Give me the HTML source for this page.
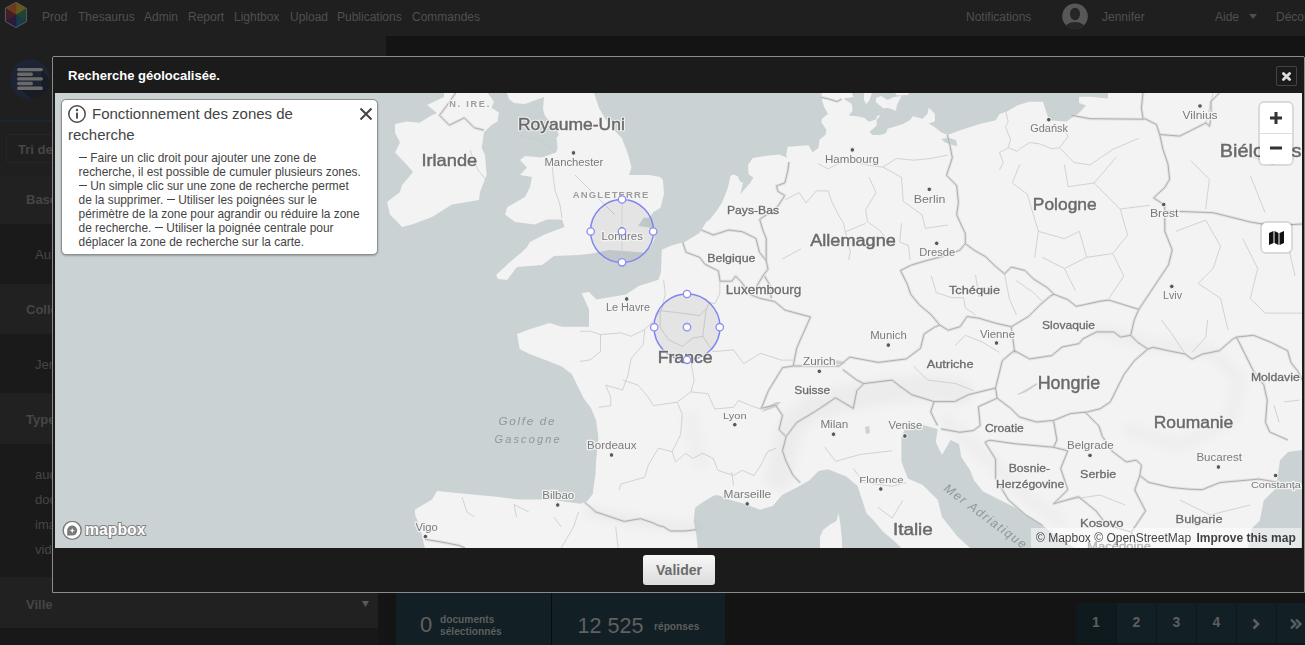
<!DOCTYPE html>
<html><head><meta charset="utf-8">
<style>
*{margin:0;padding:0;box-sizing:border-box}
html,body{width:1305px;height:645px;overflow:hidden;background:#141414;font-family:"Liberation Sans",sans-serif}
.a{position:absolute}
#nav{left:0;top:0;width:1305px;height:36px;background:#1f1f1f;box-shadow:0 1px 1px #181818}
#nav span{position:absolute;top:10px;font-size:12px;color:#4f4f4f;white-space:nowrap;line-height:14px}
.sbt{position:absolute;font-size:13px;color:#464646;white-space:nowrap;line-height:15px}
.b{font-weight:bold}
#modal{left:52px;top:56px;width:1253px;height:537px;background:#1b1b1b;border:1px solid #8c8c8c;border-radius:2px 2px 0 0}
#map{left:55px;top:93px;width:1247px;height:455px;background:#cad2d3;overflow:hidden}
#map svg{position:absolute;left:0;top:0}
.lbl{position:absolute;white-space:nowrap;color:#6e6e6e;text-shadow:0 0 2px #fff,0 0 2px #fff,0 0 1px #fff;line-height:1}
.dd{display:inline-block;width:8px;height:1.1px;background:#444;vertical-align:3.6px;margin-right:3.7px}
.pg{position:absolute;top:603px;height:40px;width:40px;background:#121f24;border-left:1px solid #0d171a;color:#5e5e5e;font-weight:bold;font-size:14px;text-align:center;line-height:38px}
</style></head><body>
<!-- NAV -->
<div id="nav" class="a">
  <svg class="a" style="left:0;top:0" width="34" height="33" viewBox="0 0 34 33">
    <polygon points="16.1,15 16.1,2.3 5.4,8.2" fill="#6a3a1c"/>
    <polygon points="16.1,15 16.1,2.3 26.6,8.4" fill="#6a561c"/>
    <polygon points="16.1,15 26.6,8.4 26.6,21.5" fill="#1d4536"/>
    <polygon points="16.1,15 26.6,21.5 16.1,27.6" fill="#193c4c"/>
    <polygon points="16.1,15 16.1,27.6 5.4,21.5" fill="#271d3a"/>
    <polygon points="16.1,15 5.4,21.5 5.4,8.2" fill="#451d29"/>
    <polygon points="16.1,2.3 26.6,8.4 26.6,21.5 16.1,27.6 5.4,21.5 5.4,8.2" fill="none" stroke="#5a5a5a" stroke-width="1"/>
  </svg>
  <span style="left:42px">Prod</span>
  <span style="left:78px">Thesaurus</span>
  <span style="left:144px">Admin</span>
  <span style="left:188px">Report</span>
  <span style="left:234px">Lightbox</span>
  <span style="left:290px">Upload</span>
  <span style="left:337px">Publications</span>
  <span style="left:412px">Commandes</span>
  <span style="left:966px">Notifications</span>
  <svg class="a" style="left:1062px;top:3px" width="27" height="27" viewBox="0 0 27 27">
    <defs><clipPath id="av"><circle cx="13" cy="13.3" r="12.8"/></clipPath></defs>
    <circle cx="13" cy="13.3" r="12.8" fill="#575757"/>
    <g clip-path="url(#av)" fill="#262626">
      <ellipse cx="13" cy="11" rx="5" ry="6.2"/>
      <ellipse cx="13" cy="27" rx="11" ry="8"/>
    </g>
  </svg>
  <span style="left:1102px">Jennifer</span>
  <span style="left:1215px">Aide</span>
  <svg class="a" style="left:1249px;top:14px" width="9" height="6"><polygon points="0,0 8,0 4,5" fill="#4f4f4f"/></svg>
  <span style="left:1276px">Déconnexion</span>
</div>
<!-- below nav -->
<div class="a" style="left:0;top:36px;width:386px;height:609px;background:#1f1f1f"></div>
<div class="a" style="left:0;top:120px;width:378px;height:2px;background:#1d2433"></div>
<svg class="a" style="left:9px;top:58px" width="42" height="42" viewBox="0 0 42 42">
 <defs><clipPath id="ci"><circle cx="21" cy="21" r="20"/></clipPath></defs>
 <circle cx="21" cy="21" r="20" fill="#1d2433"/>
 <path d="M32,11 L44,26 L44,44 L26,44 L10,30 L32,30Z" fill="#181c26" clip-path="url(#ci)"/>
 <g stroke="#6a6a6a" stroke-width="3.4" stroke-linecap="round">
  <path d="M9.7,11.6 H32.3 M9.7,16.2 H22.3 M9.7,20.9 H32.3 M9.7,25.5 H22.3 M9.7,30.2 H32.3"/>
 </g>
</svg>
<!-- sidebar rows -->
<div class="a" style="left:0;top:122px;width:378px;height:523px;background:#1f1f1f"></div>
<div class="a" style="left:6px;top:134px;width:372px;height:29px;border:1px solid #262626;border-radius:2px"></div>
<div class="sbt b" style="left:18px;top:142px">Tri de</div>
<div class="a" style="left:0;top:175px;width:378px;height:49px;background:#212121"></div>
<div class="sbt b" style="left:26px;top:192px">Base</div>
<div class="a" style="left:0;top:224px;width:378px;height:60px;background:#1a1a1a"></div>
<div class="sbt" style="left:35px;top:247px">Aur</div>
<div class="a" style="left:0;top:284px;width:378px;height:50px;background:#212121"></div>
<div class="sbt b" style="left:26px;top:302px">Colle</div>
<div class="a" style="left:0;top:334px;width:378px;height:59px;background:#1a1a1a"></div>
<div class="sbt" style="left:35px;top:357px">Jen</div>
<div class="a" style="left:0;top:393px;width:378px;height:51px;background:#212121"></div>
<div class="sbt b" style="left:26px;top:412px">Type</div>
<div class="a" style="left:0;top:444px;width:378px;height:133px;background:#1a1a1a"></div>
<div class="sbt" style="left:35px;top:467px">aud</div>
<div class="sbt" style="left:35px;top:492px">doc</div>
<div class="sbt" style="left:35px;top:517px">ima</div>
<div class="sbt" style="left:35px;top:542px">vid</div>
<div class="a" style="left:0;top:577px;width:378px;height:51px;background:#212121"></div>
<div class="sbt b" style="left:26px;top:597px">Ville</div>
<svg class="a" style="left:362px;top:601px" width="8" height="7"><polygon points="0,0 7,0 3.5,6" fill="#5a5a5a"/></svg>
<div class="a" style="left:0;top:628px;width:378px;height:17px;background:#181818"></div>
<div class="a" style="left:378px;top:122px;width:18px;height:523px;background:#151515"></div>
<div class="a" style="left:386px;top:36px;width:919px;height:609px;background:#141414"></div>
<div class="a" style="left:378px;top:36px;width:8px;height:86px;background:#1f1f1f"></div>
<!-- stats -->
<div class="a" style="left:396px;top:593px;width:329px;height:52px;background:#121f24"></div>
<div class="a" style="left:551px;top:593px;width:1px;height:52px;background:#0b0b0b"></div>
<div class="a" style="left:420px;top:613px;font-size:22px;color:#606060;line-height:24px">0</div>
<div class="a b" style="left:440px;top:613.5px;font-size:10.2px;color:#5e5e5e;line-height:12px">documents<br>sélectionnés</div>
<div class="a" style="left:577.5px;top:613.5px;font-size:21.6px;color:#606060;line-height:24px">12 525</div>
<div class="a b" style="left:654px;top:620.5px;font-size:10.2px;color:#5e5e5e;line-height:12px">réponses</div>
<!-- pagination -->
<div class="a" style="left:1076px;top:603px;width:229px;height:40px;border-radius:3px 0 0 3px;overflow:hidden;background:#121f24"></div>
<div class="pg" style="left:1076px;background:#0f1a1e;border-left:none;border-radius:3px 0 0 3px">1</div>
<div class="pg" style="left:1116px">2</div>
<div class="pg" style="left:1156px">3</div>
<div class="pg" style="left:1196px">4</div>
<div class="pg" style="left:1236px"></div><svg class="a" style="left:1251px;top:618px" width="12" height="12" viewBox="0 0 12 12"><path d="M2.5,1.5 L7,6 L2.5,10.5" fill="none" stroke="#5e5e5e" stroke-width="2.6"/></svg>
<div class="pg" style="left:1276px"></div><svg class="a" style="left:1289px;top:618px" width="14" height="12" viewBox="0 0 14 12"><path d="M2,1.5 L6.5,6 L2,10.5 M7,1.5 L11.5,6 L7,10.5" fill="none" stroke="#5e5e5e" stroke-width="2.4"/></svg>
<!-- MODAL -->
<div id="modal" class="a"></div>
<div class="a b" style="left:68px;top:68px;font-size:13px;color:#fff;line-height:15px">Recherche géolocalisée.</div>
<div class="a" style="left:1276px;top:66px;width:21px;height:20px;border:1px solid #444;border-radius:2px"></div>
<svg class="a" style="left:1281px;top:71px" width="11" height="11" viewBox="0 0 11 11"><path d="M2.4,2.4 L8.6,8.6 M8.6,2.4 L2.4,8.6" stroke="#dcdcdc" stroke-width="2.8" stroke-linecap="round"/></svg>
<div class="a" style="left:643px;top:555px;width:72px;height:30px;border-radius:3px;background:linear-gradient(#f7f7f7,#dcdcdc)"></div>
<div class="a b" style="left:643px;top:562px;width:72px;text-align:center;font-size:14px;color:#6b6b6b;line-height:16px">Valider</div>
<!-- MAP -->
<div id="map" class="a">
<svg width="1247" height="455" viewBox="55 93 1247 455">
<defs><filter id="bl" x="-20%" y="-20%" width="140%" height="140%"><feGaussianBlur stdDeviation="5"/></filter></defs>
<g fill="#f3f3f3"><path d="M821.5,93.0 L822.0,100.4 L824.5,107.7 L828.0,113.8 L822.0,118.7 L821.5,122.4 L826.4,129.8 L825.7,134.7 L819.6,139.6 L818.4,148.0 L812.7,152.3 L808.5,145.3 L787.6,146.7 L786.2,155.0 L789.0,162.0 L787.6,158.0 L779.3,154.4 L766.7,155.8 L752.8,158.0 L748.0,165.0 L748.6,174.6 L753.5,177.4 L750.0,183.0 L740.2,194.2 L743.0,183.0 L740.2,181.6 L737.4,176.0 L733.2,174.6 L730.4,176.0 L727.7,188.6 L722.0,202.5 L716.5,211.0 L709.5,220.0 L706.4,221.8 L699.5,233.0 L685.5,241.4 L671.6,245.5 L661.8,249.7 L661.0,272.0 L658.5,279.7 L638.7,286.0 L626.0,294.5 L611.4,297.0 L596.5,299.5 L589.0,292.0 L581.7,293.3 L589.0,309.4 L589.0,326.8 L561.8,326.8 L549.4,323.0 L529.6,329.3 L517.0,334.0 L519.7,349.0 L529.6,354.0 L549.4,361.5 L561.8,366.5 L571.7,374.0 L579.0,388.8 L583.5,398.0 L591.0,408.0 L596.0,420.0 L598.4,437.6 L596.0,462.0 L595.5,473.6 L592.7,494.0 L587.3,501.0 L580.5,503.7 L548.8,499.6 L519.0,499.6 L499.0,497.0 L462.0,493.4 L437.0,491.0 L432.0,499.6 L415.0,509.5 L415.0,514.5 L420.0,527.0 L424.8,548.0 L697.8,548.0 L696.4,535.0 L693.7,521.4 L695.0,507.7 L704.6,501.0 L714.0,495.5 L717.6,495.0 L732.3,500.5 L745.0,504.0 L760.0,509.7 L772.8,506.0 L782.0,495.0 L796.7,487.6 L809.5,480.2 L818.7,471.0 L828.0,469.2 L846.3,476.6 L857.4,485.7 L862.9,502.3 L866.5,513.3 L874.0,520.7 L883.0,531.7 L893.0,540.0 L901.5,548.0 L970.0,548.0 L957.0,536.0 L942.0,517.0 L937.8,500.0 L922.8,485.0 L907.8,478.5 L901.4,461.4 L901.4,437.8 L905.7,427.0 L922.8,425.0 L937.8,429.3 L935.7,442.0 L942.0,455.0 L950.6,440.0 L959.0,444.0 L961.3,457.0 L970.0,470.0 L974.2,480.6 L982.7,491.3 L1000.0,500.0 L1017.0,508.5 L1029.8,517.0 L1042.7,525.6 L1060.0,538.4 L1075.0,548.0 L1248.0,548.0 L1251.6,528.8 L1259.7,520.8 L1263.7,500.6 L1275.8,488.5 L1280.0,460.3 L1288.0,452.0 L1302.0,450.0 L1302.0,93.0 L1108.0,93.0 L1108.0,98.6 L1090.0,96.7 L1079.0,96.7 L1079.0,103.0 L1086.0,105.4 L1079.0,112.9 L1066.5,121.5 L1049.0,120.3 L1046.6,112.9 L1043.0,101.7 L1029.0,101.7 L1017.0,105.4 L1007.0,111.6 L999.5,114.0 L995.8,120.3 L979.6,124.0 L961.0,130.0 L947.4,135.0 L941.0,132.2 L934.9,127.3 L928.7,123.6 L934.9,121.2 L934.9,113.8 L928.7,107.7 L927.5,113.8 L922.6,118.7 L912.8,116.3 L910.0,120.1 L903.0,124.0 L887.5,128.7 L886.0,133.3 L879.8,134.9 L872.0,134.9 L869.7,131.8 L876.7,125.6 L876.7,119.4 L880.5,115.5 L877.4,115.5 L875.9,119.4 L868.9,121.7 L864.3,117.8 L856.5,116.3 L848.8,115.5 L852.6,110.8 L851.9,103.9 L843.3,98.4 L853.4,96.9 L851.9,93.0Z"/><path d="M507.0,93.0 L509.0,99.0 L514.0,103.0 L525.0,104.0 L544.0,97.0 L543.0,109.0 L545.0,116.0 L555.0,127.0 L559.0,135.0 L556.5,138.0 L557.7,148.0 L556.0,152.5 L542.0,157.5 L525.0,156.0 L520.0,160.0 L527.0,167.4 L520.0,175.0 L532.0,177.0 L530.0,187.0 L525.0,197.0 L507.4,207.0 L505.0,214.6 L515.0,222.0 L534.7,224.5 L547.0,219.5 L562.0,219.5 L564.5,227.0 L544.6,234.4 L530.0,242.0 L527.0,247.0 L522.0,252.0 L510.0,262.0 L496.0,275.0 L498.0,279.0 L507.0,280.0 L517.0,267.0 L542.0,265.0 L554.0,256.0 L579.0,255.0 L591.6,253.6 L609.0,250.0 L622.8,251.0 L643.7,252.5 L650.7,247.0 L654.8,238.6 L653.4,233.0 L649.3,227.4 L638.0,226.0 L643.7,217.7 L649.3,217.7 L653.4,212.0 L660.4,208.0 L664.0,194.0 L663.0,180.0 L660.0,177.0 L649.0,175.0 L629.0,175.0 L631.5,167.4 L629.0,157.5 L626.5,150.0 L621.5,137.6 L609.0,125.0 L599.0,108.0 L594.0,93.0Z"/><path d="M444.0,93.0 L487.8,93.0 L494.0,101.6 L491.5,107.7 L498.9,112.6 L497.6,121.2 L491.5,124.9 L484.0,132.2 L481.7,148.0 L485.0,155.0 L486.6,175.0 L480.0,192.0 L479.0,200.0 L452.0,204.6 L432.0,217.0 L412.0,224.5 L402.0,227.0 L390.0,214.5 L387.0,202.0 L400.0,192.0 L402.0,185.0 L413.0,172.0 L407.0,165.0 L395.0,152.5 L400.0,142.6 L395.0,132.7 L395.0,124.0 L407.0,121.5 L419.6,122.8 L429.5,116.6 L437.0,113.0 L427.0,105.0 L444.0,97.0Z"/><path d="M838.5,513.0 L840.5,525.0 L842.0,540.0 L842.0,548.0 L820.0,548.0 L820.0,537.0 L823.0,530.0 L830.0,524.5 L836.5,521.0Z"/><path d="M875.9,97.7 L881.3,96.1 L887.5,100.0 L893.7,96.9 L901.5,96.1 L896.8,105.4 L896.0,110.8 L887.5,107.7 L883.6,108.5 L875.9,102.3Z"/><path d="M864.0,93.0 L872.0,93.0 L869.0,101.0 L866.0,104.0 L864.0,100.0Z"/><path d="M895.0,93.0 L909.0,93.0 L908.0,95.0 L897.0,95.5Z"/></g>
<g filter="url(#bl)" fill="none" stroke="#000" stroke-linecap="round" stroke-linejoin="round">
 <path d="M778,478 L785,450 L792,425 L812,408 L845,398 L880,392 L920,388 L960,392" stroke-width="26" opacity="0.028"/>
 <path d="M590,512 L640,522 L695,528" stroke-width="10" opacity="0.03"/>
 <path d="M1100,330 L1150,345 L1210,350 L1240,380 L1230,420 L1180,445 L1130,430" stroke-width="14" opacity="0.02"/>
 <path d="M945,420 L990,460 L1030,500 L1060,520" stroke-width="14" opacity="0.02"/>
 <path d="M690,420 L700,460" stroke-width="18" opacity="0.015"/>
</g>
<g fill="#cad2d3">
 <path d="M761,412 L768,406 L776,402 L781,402 L776,407 L768,410Z"/>
 <path d="M865,427 L869,426 L870,433 L866,434Z"/>
 <path d="M1017.7,394 L1025,390 L1036.4,383 L1037,385 L1026,392 L1018,395Z"/>
 <path d="M833,360 L842,361 L845,364 L836,364Z"/>
 <path d="M941.2,138.9 L948.6,137.7 L956,140.1 L957.3,146.3 L952.3,145.1 L944.9,142.6Z"/>
</g>
<path d="M663.6,280.0 L665.3,293.6 L661.9,309.0 L653.3,320.9 L644.8,329.4 L643.1,344.7 L631.2,358.3 L627.8,375.5 L622.6,390.0 L605.6,385.1 L610.7,397.1 L610.7,405.6 L598.8,407.3 M580.0,331.2 L590.2,331.2 L600.5,334.6 L620.9,332.9 L631.2,336.3 L644.8,329.4 M600.5,334.6 L600.5,351.6 L590.2,359.8 L580.0,361.5 M660.2,310.7 L675.5,312.4 L689.1,314.1 L699.4,315.8 L706.2,309.0 L709.6,302.2 L714.7,303.9 L719.8,293.6 L719.8,280.0 M706.2,309.0 L702.8,336.3 L692.6,338.0 L682.3,346.5 L668.7,339.7 L660.2,327.7 L660.2,310.7 M702.8,336.3 L713.0,351.6 L733.5,349.9 L743.7,363.6 L760.7,353.3 L781.2,360.1 L793.2,360.1 M690.8,361.5 L694.2,380.0 L690.8,391.9 L677.2,402.2 L653.3,405.6 L648.2,397.1 L638.0,385.1 L622.6,380.0 M690.8,391.9 L707.9,393.6 L714.7,409.0 L733.5,407.3 L738.6,400.5 L750.5,405.6 L760.8,409.0 M677.2,402.2 L682.3,414.1 L680.6,434.6 L672.1,451.6 L675.5,461.9 L685.7,453.3 L692.6,458.4 L702.8,453.3 L713.0,458.4 L718.1,470.4 L733.5,475.5 L742.0,470.4 L754.0,475.5 L760.8,465.3 L767.6,451.6 L776.1,448.2 M672.1,451.6 L658.4,448.2 L648.2,465.3 L644.8,477.2 L620.9,484.0 L619.2,490.0 M731.8,472.1 L733.5,485.7 M785.6,199.5 L799.2,192.6 L806.0,202.9 L816.3,190.9 L828.2,190.9 L831.6,201.2 L838.4,214.8 L843.6,223.3 L845.3,231.9 L850.4,252.3 L848.7,260.0 M869.1,177.3 L876.0,192.6 L865.7,209.7 L867.4,221.6 L879.4,230.1 L886.2,238.7 M882.8,167.1 L901.5,177.3 L903.2,201.2 L922.0,214.8 L925.4,228.4 L947.6,225.0 M882.8,167.1 L896.4,158.5 L913.5,160.2 L930.5,158.5 L947.6,155.1 M818.0,163.6 L828.2,168.8 L845.3,160.2 L869.1,165.3 L882.8,167.1 M901.5,223.3 L899.8,242.1 L908.4,245.5 L910.1,260.0 M845.3,231.9 L865.7,223.3 M800.9,248.9 L782.2,259.1 M1005.7,111.6 L1008.2,121.5 L1005.7,126.5 L1008.2,134.0 L1010.6,138.9 L1008.2,147.6 L999.5,152.6 L1003.2,162.5 L999.5,170.0 M1008.2,147.6 L1017.3,151.3 L1019.8,148.8 L1029.7,142.6 L1039.7,143.9 L1052.0,148.8 L1059.5,147.6 L1068.2,136.4 L1064.4,130.2 M1059.5,147.6 L1073.9,162.5 L1090.0,165.0 M1090.0,165.0 L1112.7,149.5 L1138.8,138.3 M1019.8,164.4 L1012.3,183.0 L1027.2,194.1 L1038.3,231.3 L1034.6,257.3 M1064.4,164.4 L1068.1,186.7 L1094.1,183.0 L1116.4,156.9 M1094.1,183.0 L1120.2,209.0 L1127.6,235.0 L1112.7,253.6 L1086.7,257.3 L1064.4,268.5 L1042.0,257.3 M1120.2,209.0 L1149.9,205.3 M1038.3,231.3 L1064.4,238.7 L1079.3,231.3 L1086.7,257.3 M1112.7,253.6 L1123.9,276.0 L1109.0,298.3 M1064.4,268.5 L1075.5,290.8 M1213.1,93.0 L1205.7,123.5 M1220.5,142.1 L1242.8,153.2 L1272.6,164.4 L1302.0,153.2 M1190.8,160.7 L1209.4,179.3 L1205.7,209.0 M1250.3,175.6 L1265.2,212.7 M1175.9,231.3 L1205.7,220.2 L1220.5,246.2 L1213.1,268.5 L1198.2,283.4 L1220.5,298.3 L1228.0,330.0 M1242.8,238.7 L1257.7,268.5 L1250.3,298.3 L1265.2,313.1 L1302.0,313.1 M1287.5,242.5 L1295.0,276.0 M1207.5,320.0 L1205.8,337.1 L1192.1,352.4 M1161.4,320.0 L1171.7,333.6 L1185.3,354.1 M1284.2,401.9 L1299.6,400.1 M1274.0,405.3 L1279.1,422.3 M825.0,447.3 L835.6,461.4 L860.3,454.4 L892.2,450.8 M853.3,468.5 L863.9,482.7 L892.2,486.2 L906.3,482.7 M878.0,507.4 L892.2,518.0 L902.8,500.3 M913.4,366.0 L927.5,380.1 L955.8,383.6 L973.5,390.7 M462.0,497.1 L467.0,512.0 L474.4,517.0 M528.9,512.0 L514.0,504.5 L516.5,517.0 M553.7,517.0 L561.2,526.9 M578.5,512.0 L573.6,526.9 L561.2,548.0 M615.7,526.9 L618.2,548.0 M552.0,157.0 L553.0,175.0 L555.0,190.0 L560.0,205.0 L562.0,218.0 M931.2,275.6 L936.3,292.6 L951.6,297.7 L963.6,297.7 L965.3,308.0 L975.5,314.8 M975.5,275.0 L979.0,297.0 M1004.5,273.9 L1009.6,299.5 L1016.4,314.8 M1016.4,280.7 L1033.5,292.6 L1042.0,301.2 M955.0,345.5 L965.3,335.3 L982.3,342.1 L999.4,352.3 M1067.0,500.0 L1100.0,495.0 L1125.0,505.0 M1180.0,500.0 L1210.0,515.0 L1250.0,505.0 M470.0,150.0 L478.0,170.0 L486.0,180.0 M520.0,135.0 L540.0,140.0 L556.0,152.0 M575.0,175.0 L600.0,200.0 L615.0,215.0" fill="none" stroke="#c9c9c9" stroke-width="0.8" stroke-linejoin="round"/><path d="M820.8,97.3 L829.4,99.1 L836.8,101.6 L841.7,99.1 M789.0,162.0 L787.6,171.8 L784.8,183.0 L776.5,185.8 L777.9,191.4 L784.8,195.5 L779.3,204.0 L776.5,208.0 L759.7,219.3 L762.8,230.0 L766.2,238.5 L766.2,260.7 L768.0,269.2 L762.8,276.0 L757.7,284.6 L750.8,294.8 M701.4,230.0 L713.3,235.0 L728.7,230.0 L742.3,231.7 L756.0,238.5 L759.4,252.2 L766.2,260.7 M764.5,276.0 L769.6,284.6 L771.3,298.2 M682.6,242.0 L686.0,252.2 L699.7,257.3 L704.8,264.1 L718.4,271.0 L720.1,281.2 L732.0,281.2 L735.5,276.0 L740.6,281.2 L750.8,294.8 L759.4,298.2 L774.7,301.6 L785.0,310.1 L810.5,317.0 L803.7,332.3 L800.2,340.0 L796.7,348.3 L793.2,366.0 L782.5,367.7 L768.4,390.7 L761.3,408.4 L775.5,404.9 L782.5,415.5 L779.0,429.6 L786.1,436.7 L782.5,450.8 L786.1,461.4 L793.2,475.6 L800.2,482.7 M793.2,366.0 L839.1,366.0 L849.7,357.1 L878.0,362.4 L906.3,358.9 L920.5,348.3 L924.0,334.1 L934.6,327.1 L939.7,325.0 M786.1,436.7 L796.7,422.5 L814.4,411.9 L835.6,397.8 L853.3,408.4 L856.8,390.7 L863.9,383.6 M842.7,369.5 L856.8,380.1 L863.9,383.6 L892.2,380.1 L900.0,386.3 L911.9,394.8 L934.1,401.6 L954.6,401.6 L968.2,394.8 L995.5,388.0 L998.9,374.3 L1002.3,360.7 L1014.3,350.5 M934.1,401.6 L930.7,411.9 L937.5,425.5 M995.5,388.0 L997.2,398.2 L978.4,406.7 L980.2,425.5 L973.3,430.6 L959.7,432.3 L940.9,428.9 M997.2,398.2 L1010.8,408.4 L1019.4,417.0 L1036.4,422.0 L1053.5,420.4 L1070.5,413.6 L1087.6,411.9 L1100.1,408.7 L1110.3,401.9 L1117.1,388.2 L1123.9,374.6 L1134.2,360.9 L1147.8,349.0 M1053.5,420.4 L1056.9,440.0 L1053.6,447.3 L1014.7,443.7 L990.0,440.2 L984.9,442.1 M984.9,442.1 L995.6,459.2 L995.6,478.5 L1008.4,499.9 L1025.5,514.9 L1042.7,525.6 M1053.6,447.3 L1067.8,450.8 L1060.7,468.5 L1067.8,489.7 L1053.6,503.8 L1078.4,496.7 L1096.0,510.9 L1106.7,525.0 L1131.4,532.1 L1138.5,548.0 M1085.3,412.4 L1098.9,426.0 L1102.3,436.3 L1112.6,451.6 L1126.2,461.9 L1136.4,460.1 L1141.5,465.3 L1139.8,475.5 L1148.4,482.3 L1170.5,487.4 L1187.6,489.1 L1202.1,489.7 L1219.8,482.6 L1258.7,479.1 L1279.9,482.6 M1139.8,475.5 L1134.7,490.0 L1145.5,510.9 L1131.4,532.1 M1147.8,349.0 L1152.9,347.3 L1168.3,350.7 L1185.3,354.1 L1192.1,359.2 L1202.4,354.1 L1219.4,350.7 L1233.1,338.8 L1236.5,337.1 L1245.0,354.1 L1253.5,371.2 L1263.8,384.8 L1267.2,400.1 L1265.5,422.3 L1269.7,432.0 L1287.9,440.0 M1236.5,337.1 L1253.5,335.3 L1270.6,342.2 L1287.6,350.7 L1291.0,362.6 L1297.9,371.2 L1302.0,380.0 M1014.3,350.5 L1029.6,359.0 L1051.8,355.6 L1062.0,347.0 L1079.0,343.6 L1083.0,338.8 L1096.6,331.9 L1113.7,331.9 L1120.5,337.1 L1130.7,335.3 L1137.6,342.2 L1147.8,349.0 M1011.3,326.7 L1014.7,352.3 L1014.3,350.5 M939.7,325.0 L948.2,330.2 L960.1,326.7 L967.0,316.5 L978.9,318.2 L996.0,323.3 L1011.3,326.7 L1028.4,316.5 L1040.3,304.6 L1050.5,296.0 L1054.0,294.3 L1067.6,299.5 L1076.1,306.3 L1084.6,304.6 L1100.0,301.2 L1109.0,300.1 L1138.8,309.4 L1134.2,320.0 L1130.7,335.3 M1054.0,294.3 L1047.1,287.5 L1033.5,279.0 L1025.0,270.5 L1011.3,267.0 L1004.5,273.9 L994.3,265.3 L985.7,256.8 L973.8,250.0 L965.3,243.6 M939.7,325.0 L931.2,314.8 L919.2,304.6 L910.7,294.3 L907.3,284.1 L900.5,270.5 L910.7,265.3 L927.7,260.2 L948.2,255.1 L960.1,250.0 L965.3,243.6 L965.3,233.3 L961.9,226.5 L956.7,214.6 L958.4,202.6 L956.7,185.6 L946.5,175.3 L951.6,160.0 L952.3,157.5 L949.9,145.1 L947.4,135.2 M1138.8,309.4 L1146.2,298.3 L1168.5,264.8 L1172.2,249.9 L1164.8,231.3 L1164.8,212.7 L1164.8,205.3 L1153.6,197.8 L1164.7,187.6 L1169.6,179.3 L1168.0,164.3 L1163.0,149.4 L1159.7,134.5 L1156.4,124.5 L1144.7,118.7 L1143.1,119.2 L1141.4,108.0 L1143.0,93.0 M1164.8,210.9 L1213.1,212.7 L1250.3,222.0 L1272.6,225.7 L1302.0,224.0 M1159.7,134.5 L1179.6,136.1 L1192.9,129.5 L1206.0,122.9 L1209.4,126.2 L1211.0,117.9 L1211.0,101.3 L1219.4,93.0 M1071.4,115.3 L1090.0,118.7 L1143.1,119.2 M584.6,502.3 L592.7,509.1 L595.5,511.8 L611.8,517.3 L624.1,521.4 L640.5,518.7 L652.8,522.8 L658.2,525.5 L663.7,526.8 L670.5,531.0 L685.5,531.0 L696.4,529.6 M424.8,539.3 L439.7,541.7 L459.5,545.5 L465.0,548.0 M455.6,93.0 L447.0,105.4 L439.5,115.3 L449.4,125.2 L464.3,117.8 L474.2,127.7 L484.0,130.2" fill="none" stroke="#d6d6d6" stroke-width="3" stroke-linejoin="round" opacity="0.6"/><path d="M820.8,97.3 L829.4,99.1 L836.8,101.6 L841.7,99.1 M789.0,162.0 L787.6,171.8 L784.8,183.0 L776.5,185.8 L777.9,191.4 L784.8,195.5 L779.3,204.0 L776.5,208.0 L759.7,219.3 L762.8,230.0 L766.2,238.5 L766.2,260.7 L768.0,269.2 L762.8,276.0 L757.7,284.6 L750.8,294.8 M701.4,230.0 L713.3,235.0 L728.7,230.0 L742.3,231.7 L756.0,238.5 L759.4,252.2 L766.2,260.7 M764.5,276.0 L769.6,284.6 L771.3,298.2 M682.6,242.0 L686.0,252.2 L699.7,257.3 L704.8,264.1 L718.4,271.0 L720.1,281.2 L732.0,281.2 L735.5,276.0 L740.6,281.2 L750.8,294.8 L759.4,298.2 L774.7,301.6 L785.0,310.1 L810.5,317.0 L803.7,332.3 L800.2,340.0 L796.7,348.3 L793.2,366.0 L782.5,367.7 L768.4,390.7 L761.3,408.4 L775.5,404.9 L782.5,415.5 L779.0,429.6 L786.1,436.7 L782.5,450.8 L786.1,461.4 L793.2,475.6 L800.2,482.7 M793.2,366.0 L839.1,366.0 L849.7,357.1 L878.0,362.4 L906.3,358.9 L920.5,348.3 L924.0,334.1 L934.6,327.1 L939.7,325.0 M786.1,436.7 L796.7,422.5 L814.4,411.9 L835.6,397.8 L853.3,408.4 L856.8,390.7 L863.9,383.6 M842.7,369.5 L856.8,380.1 L863.9,383.6 L892.2,380.1 L900.0,386.3 L911.9,394.8 L934.1,401.6 L954.6,401.6 L968.2,394.8 L995.5,388.0 L998.9,374.3 L1002.3,360.7 L1014.3,350.5 M934.1,401.6 L930.7,411.9 L937.5,425.5 M995.5,388.0 L997.2,398.2 L978.4,406.7 L980.2,425.5 L973.3,430.6 L959.7,432.3 L940.9,428.9 M997.2,398.2 L1010.8,408.4 L1019.4,417.0 L1036.4,422.0 L1053.5,420.4 L1070.5,413.6 L1087.6,411.9 L1100.1,408.7 L1110.3,401.9 L1117.1,388.2 L1123.9,374.6 L1134.2,360.9 L1147.8,349.0 M1053.5,420.4 L1056.9,440.0 L1053.6,447.3 L1014.7,443.7 L990.0,440.2 L984.9,442.1 M984.9,442.1 L995.6,459.2 L995.6,478.5 L1008.4,499.9 L1025.5,514.9 L1042.7,525.6 M1053.6,447.3 L1067.8,450.8 L1060.7,468.5 L1067.8,489.7 L1053.6,503.8 L1078.4,496.7 L1096.0,510.9 L1106.7,525.0 L1131.4,532.1 L1138.5,548.0 M1085.3,412.4 L1098.9,426.0 L1102.3,436.3 L1112.6,451.6 L1126.2,461.9 L1136.4,460.1 L1141.5,465.3 L1139.8,475.5 L1148.4,482.3 L1170.5,487.4 L1187.6,489.1 L1202.1,489.7 L1219.8,482.6 L1258.7,479.1 L1279.9,482.6 M1139.8,475.5 L1134.7,490.0 L1145.5,510.9 L1131.4,532.1 M1147.8,349.0 L1152.9,347.3 L1168.3,350.7 L1185.3,354.1 L1192.1,359.2 L1202.4,354.1 L1219.4,350.7 L1233.1,338.8 L1236.5,337.1 L1245.0,354.1 L1253.5,371.2 L1263.8,384.8 L1267.2,400.1 L1265.5,422.3 L1269.7,432.0 L1287.9,440.0 M1236.5,337.1 L1253.5,335.3 L1270.6,342.2 L1287.6,350.7 L1291.0,362.6 L1297.9,371.2 L1302.0,380.0 M1014.3,350.5 L1029.6,359.0 L1051.8,355.6 L1062.0,347.0 L1079.0,343.6 L1083.0,338.8 L1096.6,331.9 L1113.7,331.9 L1120.5,337.1 L1130.7,335.3 L1137.6,342.2 L1147.8,349.0 M1011.3,326.7 L1014.7,352.3 L1014.3,350.5 M939.7,325.0 L948.2,330.2 L960.1,326.7 L967.0,316.5 L978.9,318.2 L996.0,323.3 L1011.3,326.7 L1028.4,316.5 L1040.3,304.6 L1050.5,296.0 L1054.0,294.3 L1067.6,299.5 L1076.1,306.3 L1084.6,304.6 L1100.0,301.2 L1109.0,300.1 L1138.8,309.4 L1134.2,320.0 L1130.7,335.3 M1054.0,294.3 L1047.1,287.5 L1033.5,279.0 L1025.0,270.5 L1011.3,267.0 L1004.5,273.9 L994.3,265.3 L985.7,256.8 L973.8,250.0 L965.3,243.6 M939.7,325.0 L931.2,314.8 L919.2,304.6 L910.7,294.3 L907.3,284.1 L900.5,270.5 L910.7,265.3 L927.7,260.2 L948.2,255.1 L960.1,250.0 L965.3,243.6 L965.3,233.3 L961.9,226.5 L956.7,214.6 L958.4,202.6 L956.7,185.6 L946.5,175.3 L951.6,160.0 L952.3,157.5 L949.9,145.1 L947.4,135.2 M1138.8,309.4 L1146.2,298.3 L1168.5,264.8 L1172.2,249.9 L1164.8,231.3 L1164.8,212.7 L1164.8,205.3 L1153.6,197.8 L1164.7,187.6 L1169.6,179.3 L1168.0,164.3 L1163.0,149.4 L1159.7,134.5 L1156.4,124.5 L1144.7,118.7 L1143.1,119.2 L1141.4,108.0 L1143.0,93.0 M1164.8,210.9 L1213.1,212.7 L1250.3,222.0 L1272.6,225.7 L1302.0,224.0 M1159.7,134.5 L1179.6,136.1 L1192.9,129.5 L1206.0,122.9 L1209.4,126.2 L1211.0,117.9 L1211.0,101.3 L1219.4,93.0 M1071.4,115.3 L1090.0,118.7 L1143.1,119.2 M584.6,502.3 L592.7,509.1 L595.5,511.8 L611.8,517.3 L624.1,521.4 L640.5,518.7 L652.8,522.8 L658.2,525.5 L663.7,526.8 L670.5,531.0 L685.5,531.0 L696.4,529.6 M424.8,539.3 L439.7,541.7 L459.5,545.5 L465.0,548.0 M455.6,93.0 L447.0,105.4 L439.5,115.3 L449.4,125.2 L464.3,117.8 L474.2,127.7 L484.0,130.2" fill="none" stroke="#a2a2a2" stroke-width="0.8" stroke-linejoin="round"/>
<g>
 <circle cx="622" cy="231" r="31.5" fill="rgba(120,120,120,0.12)" stroke="#8084ef" stroke-width="1.5"/>
 <line x1="622" y1="199.5" x2="622" y2="262.5" stroke="#c8c8d8" stroke-width="0.8"/>
 <circle cx="687" cy="327" r="33" fill="rgba(120,120,120,0.12)" stroke="#8084ef" stroke-width="1.5"/>
</g>
<g font-family="Liberation Sans"><text x="449.2" y="106.7" font-size="9.19" textLength="40.0" lengthAdjust="spacing" font-weight="bold" font-style="normal" fill="none" stroke="#f4f4f4" stroke-width="2.6" stroke-linejoin="round" opacity="0.9">N. IRE.</text><text x="518.0" y="130.0" font-size="17.42" textLength="106.8" lengthAdjust="spacingAndGlyphs" font-weight="normal" font-style="normal" fill="none" stroke="#f4f4f4" stroke-width="2.6" stroke-linejoin="round" opacity="0.9">Royaume-Uni</text><text x="421.4" y="165.7" font-size="17.42" textLength="55.8" lengthAdjust="spacingAndGlyphs" font-weight="normal" font-style="normal" fill="none" stroke="#f4f4f4" stroke-width="2.6" stroke-linejoin="round" opacity="0.9">Irlande</text><text x="544.5" y="165.9" font-size="11.66" textLength="58.8" lengthAdjust="spacingAndGlyphs" font-weight="normal" font-style="normal" fill="none" stroke="#f4f4f4" stroke-width="2.6" stroke-linejoin="round" opacity="0.9">Manchester</text><text x="572.7" y="198.4" font-size="9.47" textLength="75.7" lengthAdjust="spacing" font-weight="bold" font-style="normal" fill="none" stroke="#f4f4f4" stroke-width="2.6" stroke-linejoin="round" opacity="0.9">ANGLETERRE</text><text x="601.4" y="240.2" font-size="11.66" textLength="41.6" lengthAdjust="spacingAndGlyphs" font-weight="normal" font-style="normal" fill="none" stroke="#f4f4f4" stroke-width="2.6" stroke-linejoin="round" opacity="0.9">Londres</text><text x="825.0" y="163.3" font-size="11.80" textLength="54.0" lengthAdjust="spacingAndGlyphs" font-weight="normal" font-style="normal" fill="none" stroke="#f4f4f4" stroke-width="2.6" stroke-linejoin="round" opacity="0.9">Hambourg</text><text x="727.0" y="213.5" font-size="10.70" textLength="52.0" lengthAdjust="spacingAndGlyphs" font-weight="normal" font-style="normal" fill="none" stroke="#f4f4f4" stroke-width="2.6" stroke-linejoin="round" opacity="0.9">Pays-Bas</text><text x="913.7" y="202.7" font-size="11.66" textLength="31.6" lengthAdjust="spacingAndGlyphs" font-weight="normal" font-style="normal" fill="none" stroke="#f4f4f4" stroke-width="2.6" stroke-linejoin="round" opacity="0.9">Berlin</text><text x="810.2" y="246.3" font-size="16.87" textLength="85.6" lengthAdjust="spacingAndGlyphs" font-weight="normal" font-style="normal" fill="none" stroke="#f4f4f4" stroke-width="2.6" stroke-linejoin="round" opacity="0.9">Allemagne</text><text x="919.3" y="256.0" font-size="11.25" textLength="36.0" lengthAdjust="spacingAndGlyphs" font-weight="normal" font-style="normal" fill="none" stroke="#f4f4f4" stroke-width="2.6" stroke-linejoin="round" opacity="0.9">Dresde</text><text x="707.2" y="262.0" font-size="10.97" textLength="48.3" lengthAdjust="spacingAndGlyphs" font-weight="normal" font-style="normal" fill="none" stroke="#f4f4f4" stroke-width="2.6" stroke-linejoin="round" opacity="0.9">Belgique</text><text x="725.8" y="293.9" font-size="13.31" textLength="75.5" lengthAdjust="spacingAndGlyphs" font-weight="normal" font-style="normal" fill="none" stroke="#f4f4f4" stroke-width="2.6" stroke-linejoin="round" opacity="0.9">Luxembourg</text><text x="949.0" y="293.9" font-size="11.80" textLength="51.0" lengthAdjust="spacingAndGlyphs" font-weight="normal" font-style="normal" fill="none" stroke="#f4f4f4" stroke-width="2.6" stroke-linejoin="round" opacity="0.9">Tchéquie</text><text x="1030.2" y="131.6" font-size="11.11" textLength="37.8" lengthAdjust="spacingAndGlyphs" font-weight="normal" font-style="normal" fill="none" stroke="#f4f4f4" stroke-width="2.6" stroke-linejoin="round" opacity="0.9">Gdańsk</text><text x="1182.6" y="118.6" font-size="11.11" textLength="35.0" lengthAdjust="spacingAndGlyphs" font-weight="normal" font-style="normal" fill="none" stroke="#f4f4f4" stroke-width="2.6" stroke-linejoin="round" opacity="0.9">Vilnius</text><text x="1219.8" y="156.9" font-size="17.83" textLength="97.2" lengthAdjust="spacingAndGlyphs" font-weight="normal" font-style="normal" fill="none" stroke="#f4f4f4" stroke-width="2.6" stroke-linejoin="round" opacity="0.9">Biélorussie</text><text x="1032.8" y="209.7" font-size="17.28" textLength="63.9" lengthAdjust="spacingAndGlyphs" font-weight="normal" font-style="normal" fill="none" stroke="#f4f4f4" stroke-width="2.6" stroke-linejoin="round" opacity="0.9">Pologne</text><text x="1149.9" y="217.2" font-size="11.25" textLength="28.6" lengthAdjust="spacingAndGlyphs" font-weight="normal" font-style="normal" fill="none" stroke="#f4f4f4" stroke-width="2.6" stroke-linejoin="round" opacity="0.9">Brest</text><text x="1163.0" y="299.0" font-size="11.25" textLength="19.0" lengthAdjust="spacingAndGlyphs" font-weight="normal" font-style="normal" fill="none" stroke="#f4f4f4" stroke-width="2.6" stroke-linejoin="round" opacity="0.9">Lviv</text><text x="1042.0" y="329.0" font-size="11.52" textLength="53.0" lengthAdjust="spacingAndGlyphs" font-weight="normal" font-style="normal" fill="none" stroke="#f4f4f4" stroke-width="2.6" stroke-linejoin="round" opacity="0.9">Slovaquie</text><text x="605.9" y="311.0" font-size="11.25" textLength="44.1" lengthAdjust="spacingAndGlyphs" font-weight="normal" font-style="normal" fill="none" stroke="#f4f4f4" stroke-width="2.6" stroke-linejoin="round" opacity="0.9">Le Havre</text><text x="657.7" y="362.7" font-size="17.42" textLength="55.0" lengthAdjust="spacingAndGlyphs" font-weight="normal" font-style="normal" fill="none" stroke="#f4f4f4" stroke-width="2.6" stroke-linejoin="round" opacity="0.9">France</text><text x="870.2" y="338.7" font-size="10.15" textLength="36.5" lengthAdjust="spacingAndGlyphs" font-weight="normal" font-style="normal" fill="none" stroke="#f4f4f4" stroke-width="2.6" stroke-linejoin="round" opacity="0.9">Munich</text><text x="979.9" y="337.7" font-size="10.56" textLength="35.1" lengthAdjust="spacingAndGlyphs" font-weight="normal" font-style="normal" fill="none" stroke="#f4f4f4" stroke-width="2.6" stroke-linejoin="round" opacity="0.9">Vienne</text><text x="803.0" y="365.3" font-size="10.70" textLength="32.6" lengthAdjust="spacingAndGlyphs" font-weight="normal" font-style="normal" fill="none" stroke="#f4f4f4" stroke-width="2.6" stroke-linejoin="round" opacity="0.9">Zurich</text><text x="794.2" y="394.3" font-size="11.25" textLength="36.1" lengthAdjust="spacingAndGlyphs" font-weight="normal" font-style="normal" fill="none" stroke="#f4f4f4" stroke-width="2.6" stroke-linejoin="round" opacity="0.9">Suisse</text><text x="926.8" y="367.7" font-size="11.11" textLength="46.7" lengthAdjust="spacingAndGlyphs" font-weight="normal" font-style="normal" fill="none" stroke="#f4f4f4" stroke-width="2.6" stroke-linejoin="round" opacity="0.9">Autriche</text><text x="1037.7" y="388.9" font-size="18.38" textLength="62.6" lengthAdjust="spacingAndGlyphs" font-weight="normal" font-style="normal" fill="none" stroke="#f4f4f4" stroke-width="2.6" stroke-linejoin="round" opacity="0.9">Hongrie</text><text x="1250.9" y="380.8" font-size="10.70" textLength="48.8" lengthAdjust="spacingAndGlyphs" font-weight="normal" font-style="normal" fill="none" stroke="#f4f4f4" stroke-width="2.6" stroke-linejoin="round" opacity="0.9">Moldavie</text><text x="723.1" y="419.0" font-size="9.60" textLength="23.4" lengthAdjust="spacingAndGlyphs" font-weight="normal" font-style="normal" fill="none" stroke="#f4f4f4" stroke-width="2.6" stroke-linejoin="round" opacity="0.9">Lyon</text><text x="820.4" y="428.2" font-size="10.15" textLength="27.9" lengthAdjust="spacingAndGlyphs" font-weight="normal" font-style="normal" fill="none" stroke="#f4f4f4" stroke-width="2.6" stroke-linejoin="round" opacity="0.9">Milan</text><text x="888.6" y="429.3" font-size="10.29" textLength="33.6" lengthAdjust="spacingAndGlyphs" font-weight="normal" font-style="normal" fill="none" stroke="#f4f4f4" stroke-width="2.6" stroke-linejoin="round" opacity="0.9">Venise</text><text x="984.9" y="432.0" font-size="11.11" textLength="38.9" lengthAdjust="spacingAndGlyphs" font-weight="normal" font-style="normal" fill="none" stroke="#f4f4f4" stroke-width="2.6" stroke-linejoin="round" opacity="0.9">Croatie</text><text x="1153.7" y="427.8" font-size="17.01" textLength="79.5" lengthAdjust="spacingAndGlyphs" font-weight="normal" font-style="normal" fill="none" stroke="#f4f4f4" stroke-width="2.6" stroke-linejoin="round" opacity="0.9">Roumanie</text><text x="587.0" y="449.2" font-size="11.25" textLength="49.5" lengthAdjust="spacingAndGlyphs" font-weight="normal" font-style="normal" fill="none" stroke="#f4f4f4" stroke-width="2.6" stroke-linejoin="round" opacity="0.9">Bordeaux</text><text x="1067.0" y="449.4" font-size="10.70" textLength="46.7" lengthAdjust="spacingAndGlyphs" font-weight="normal" font-style="normal" fill="none" stroke="#f4f4f4" stroke-width="2.6" stroke-linejoin="round" opacity="0.9">Belgrade</text><text x="1196.4" y="461.4" font-size="10.70" textLength="45.6" lengthAdjust="spacingAndGlyphs" font-weight="normal" font-style="normal" fill="none" stroke="#f4f4f4" stroke-width="2.6" stroke-linejoin="round" opacity="0.9">Bucarest</text><text x="1008.7" y="472.0" font-size="10.70" textLength="41.3" lengthAdjust="spacingAndGlyphs" font-weight="normal" font-style="normal" fill="none" stroke="#f4f4f4" stroke-width="2.6" stroke-linejoin="round" opacity="0.9">Bosnie-</text><text x="996.0" y="487.6" font-size="10.70" textLength="68.2" lengthAdjust="spacingAndGlyphs" font-weight="normal" font-style="normal" fill="none" stroke="#f4f4f4" stroke-width="2.6" stroke-linejoin="round" opacity="0.9">Herzégovine</text><text x="1080.1" y="478.0" font-size="11.11" textLength="36.1" lengthAdjust="spacingAndGlyphs" font-weight="normal" font-style="normal" fill="none" stroke="#f4f4f4" stroke-width="2.6" stroke-linejoin="round" opacity="0.9">Serbie</text><text x="1250.9" y="487.9" font-size="9.74" textLength="50.1" lengthAdjust="spacingAndGlyphs" font-weight="normal" font-style="normal" fill="none" stroke="#f4f4f4" stroke-width="2.6" stroke-linejoin="round" opacity="0.9">Constanța</text><text x="859.3" y="482.7" font-size="9.74" textLength="44.2" lengthAdjust="spacingAndGlyphs" font-weight="normal" font-style="normal" fill="none" stroke="#f4f4f4" stroke-width="2.6" stroke-linejoin="round" opacity="0.9">Florence</text><text x="723.5" y="497.5" font-size="10.29" textLength="47.7" lengthAdjust="spacingAndGlyphs" font-weight="normal" font-style="normal" fill="none" stroke="#f4f4f4" stroke-width="2.6" stroke-linejoin="round" opacity="0.9">Marseille</text><text x="542.3" y="498.8" font-size="11.52" textLength="31.9" lengthAdjust="spacingAndGlyphs" font-weight="normal" font-style="normal" fill="none" stroke="#f4f4f4" stroke-width="2.6" stroke-linejoin="round" opacity="0.9">Bilbao</text><text x="892.9" y="534.6" font-size="16.87" textLength="39.9" lengthAdjust="spacingAndGlyphs" font-weight="normal" font-style="normal" fill="none" stroke="#f4f4f4" stroke-width="2.6" stroke-linejoin="round" opacity="0.9">Italie</text><text x="415.4" y="530.8" font-size="11.66" textLength="22.3" lengthAdjust="spacingAndGlyphs" font-weight="normal" font-style="normal" fill="none" stroke="#f4f4f4" stroke-width="2.6" stroke-linejoin="round" opacity="0.9">Vigo</text><text x="1080.0" y="526.8" font-size="11.11" textLength="43.6" lengthAdjust="spacingAndGlyphs" font-weight="normal" font-style="normal" fill="none" stroke="#f4f4f4" stroke-width="2.6" stroke-linejoin="round" opacity="0.9">Kosovo</text><text x="1175.6" y="523.2" font-size="11.25" textLength="47.0" lengthAdjust="spacingAndGlyphs" font-weight="normal" font-style="normal" fill="none" stroke="#f4f4f4" stroke-width="2.6" stroke-linejoin="round" opacity="0.9">Bulgarie</text><text x="1087.0" y="550.0" font-size="10.97" textLength="64.0" lengthAdjust="spacingAndGlyphs" font-weight="normal" font-style="normal" fill="none" stroke="#f4f4f4" stroke-width="2.6" stroke-linejoin="round" opacity="0.9">Macédoine</text><text x="449.2" y="106.7" font-size="9.19" textLength="40.0" lengthAdjust="spacing" font-weight="bold" font-style="normal" fill="#9d9d9d">N. IRE.</text><text x="518.0" y="130.0" font-size="17.42" textLength="106.8" lengthAdjust="spacingAndGlyphs" font-weight="normal" font-style="normal" fill="#6a6a6a" stroke="#6a6a6a" stroke-width="0.45">Royaume-Uni</text><text x="421.4" y="165.7" font-size="17.42" textLength="55.8" lengthAdjust="spacingAndGlyphs" font-weight="normal" font-style="normal" fill="#6a6a6a" stroke="#6a6a6a" stroke-width="0.45">Irlande</text><text x="544.5" y="165.9" font-size="11.66" textLength="58.8" lengthAdjust="spacingAndGlyphs" font-weight="normal" font-style="normal" fill="#7a7a7a">Manchester</text><text x="572.7" y="198.4" font-size="9.47" textLength="75.7" lengthAdjust="spacing" font-weight="bold" font-style="normal" fill="#9d9d9d">ANGLETERRE</text><text x="601.4" y="240.2" font-size="11.66" textLength="41.6" lengthAdjust="spacingAndGlyphs" font-weight="normal" font-style="normal" fill="#7a7a7a">Londres</text><text x="825.0" y="163.3" font-size="11.80" textLength="54.0" lengthAdjust="spacingAndGlyphs" font-weight="normal" font-style="normal" fill="#7a7a7a">Hambourg</text><text x="727.0" y="213.5" font-size="10.70" textLength="52.0" lengthAdjust="spacingAndGlyphs" font-weight="normal" font-style="normal" fill="#6c6c6c" stroke="#6c6c6c" stroke-width="0.3">Pays-Bas</text><text x="913.7" y="202.7" font-size="11.66" textLength="31.6" lengthAdjust="spacingAndGlyphs" font-weight="normal" font-style="normal" fill="#7a7a7a">Berlin</text><text x="810.2" y="246.3" font-size="16.87" textLength="85.6" lengthAdjust="spacingAndGlyphs" font-weight="normal" font-style="normal" fill="#6a6a6a" stroke="#6a6a6a" stroke-width="0.45">Allemagne</text><text x="919.3" y="256.0" font-size="11.25" textLength="36.0" lengthAdjust="spacingAndGlyphs" font-weight="normal" font-style="normal" fill="#7a7a7a">Dresde</text><text x="707.2" y="262.0" font-size="10.97" textLength="48.3" lengthAdjust="spacingAndGlyphs" font-weight="normal" font-style="normal" fill="#6c6c6c" stroke="#6c6c6c" stroke-width="0.3">Belgique</text><text x="725.8" y="293.9" font-size="13.31" textLength="75.5" lengthAdjust="spacingAndGlyphs" font-weight="normal" font-style="normal" fill="#6c6c6c" stroke="#6c6c6c" stroke-width="0.3">Luxembourg</text><text x="949.0" y="293.9" font-size="11.80" textLength="51.0" lengthAdjust="spacingAndGlyphs" font-weight="normal" font-style="normal" fill="#6c6c6c" stroke="#6c6c6c" stroke-width="0.3">Tchéquie</text><text x="1030.2" y="131.6" font-size="11.11" textLength="37.8" lengthAdjust="spacingAndGlyphs" font-weight="normal" font-style="normal" fill="#7a7a7a">Gdańsk</text><text x="1182.6" y="118.6" font-size="11.11" textLength="35.0" lengthAdjust="spacingAndGlyphs" font-weight="normal" font-style="normal" fill="#7a7a7a">Vilnius</text><text x="1219.8" y="156.9" font-size="17.83" textLength="97.2" lengthAdjust="spacingAndGlyphs" font-weight="normal" font-style="normal" fill="#6a6a6a" stroke="#6a6a6a" stroke-width="0.45">Biélorussie</text><text x="1032.8" y="209.7" font-size="17.28" textLength="63.9" lengthAdjust="spacingAndGlyphs" font-weight="normal" font-style="normal" fill="#6a6a6a" stroke="#6a6a6a" stroke-width="0.45">Pologne</text><text x="1149.9" y="217.2" font-size="11.25" textLength="28.6" lengthAdjust="spacingAndGlyphs" font-weight="normal" font-style="normal" fill="#7a7a7a">Brest</text><text x="1163.0" y="299.0" font-size="11.25" textLength="19.0" lengthAdjust="spacingAndGlyphs" font-weight="normal" font-style="normal" fill="#7a7a7a">Lviv</text><text x="1042.0" y="329.0" font-size="11.52" textLength="53.0" lengthAdjust="spacingAndGlyphs" font-weight="normal" font-style="normal" fill="#6c6c6c" stroke="#6c6c6c" stroke-width="0.3">Slovaquie</text><text x="605.9" y="311.0" font-size="11.25" textLength="44.1" lengthAdjust="spacingAndGlyphs" font-weight="normal" font-style="normal" fill="#7a7a7a">Le Havre</text><text x="657.7" y="362.7" font-size="17.42" textLength="55.0" lengthAdjust="spacingAndGlyphs" font-weight="normal" font-style="normal" fill="#6a6a6a" stroke="#6a6a6a" stroke-width="0.45">France</text><text x="870.2" y="338.7" font-size="10.15" textLength="36.5" lengthAdjust="spacingAndGlyphs" font-weight="normal" font-style="normal" fill="#7a7a7a">Munich</text><text x="979.9" y="337.7" font-size="10.56" textLength="35.1" lengthAdjust="spacingAndGlyphs" font-weight="normal" font-style="normal" fill="#7a7a7a">Vienne</text><text x="803.0" y="365.3" font-size="10.70" textLength="32.6" lengthAdjust="spacingAndGlyphs" font-weight="normal" font-style="normal" fill="#7a7a7a">Zurich</text><text x="794.2" y="394.3" font-size="11.25" textLength="36.1" lengthAdjust="spacingAndGlyphs" font-weight="normal" font-style="normal" fill="#6c6c6c" stroke="#6c6c6c" stroke-width="0.3">Suisse</text><text x="926.8" y="367.7" font-size="11.11" textLength="46.7" lengthAdjust="spacingAndGlyphs" font-weight="normal" font-style="normal" fill="#6c6c6c" stroke="#6c6c6c" stroke-width="0.3">Autriche</text><text x="1037.7" y="388.9" font-size="18.38" textLength="62.6" lengthAdjust="spacingAndGlyphs" font-weight="normal" font-style="normal" fill="#6a6a6a" stroke="#6a6a6a" stroke-width="0.45">Hongrie</text><text x="1250.9" y="380.8" font-size="10.70" textLength="48.8" lengthAdjust="spacingAndGlyphs" font-weight="normal" font-style="normal" fill="#6c6c6c" stroke="#6c6c6c" stroke-width="0.3">Moldavie</text><text x="723.1" y="419.0" font-size="9.60" textLength="23.4" lengthAdjust="spacingAndGlyphs" font-weight="normal" font-style="normal" fill="#7a7a7a">Lyon</text><text x="820.4" y="428.2" font-size="10.15" textLength="27.9" lengthAdjust="spacingAndGlyphs" font-weight="normal" font-style="normal" fill="#7a7a7a">Milan</text><text x="888.6" y="429.3" font-size="10.29" textLength="33.6" lengthAdjust="spacingAndGlyphs" font-weight="normal" font-style="normal" fill="#7a7a7a">Venise</text><text x="984.9" y="432.0" font-size="11.11" textLength="38.9" lengthAdjust="spacingAndGlyphs" font-weight="normal" font-style="normal" fill="#6c6c6c" stroke="#6c6c6c" stroke-width="0.3">Croatie</text><text x="1153.7" y="427.8" font-size="17.01" textLength="79.5" lengthAdjust="spacingAndGlyphs" font-weight="normal" font-style="normal" fill="#6a6a6a" stroke="#6a6a6a" stroke-width="0.45">Roumanie</text><text x="498.5" y="424.5" font-size="11.66" textLength="56.0" lengthAdjust="spacing" font-weight="normal" font-style="italic" fill="#8a9a9b">Golfe de</text><text x="494.6" y="442.5" font-size="10.97" textLength="64.9" lengthAdjust="spacing" font-weight="normal" font-style="italic" fill="#8a9a9b">Gascogne</text><text x="587.0" y="449.2" font-size="11.25" textLength="49.5" lengthAdjust="spacingAndGlyphs" font-weight="normal" font-style="normal" fill="#7a7a7a">Bordeaux</text><text x="1067.0" y="449.4" font-size="10.70" textLength="46.7" lengthAdjust="spacingAndGlyphs" font-weight="normal" font-style="normal" fill="#7a7a7a">Belgrade</text><text x="1196.4" y="461.4" font-size="10.70" textLength="45.6" lengthAdjust="spacingAndGlyphs" font-weight="normal" font-style="normal" fill="#7a7a7a">Bucarest</text><text x="1008.7" y="472.0" font-size="10.70" textLength="41.3" lengthAdjust="spacingAndGlyphs" font-weight="normal" font-style="normal" fill="#6c6c6c" stroke="#6c6c6c" stroke-width="0.3">Bosnie-</text><text x="996.0" y="487.6" font-size="10.70" textLength="68.2" lengthAdjust="spacingAndGlyphs" font-weight="normal" font-style="normal" fill="#6c6c6c" stroke="#6c6c6c" stroke-width="0.3">Herzégovine</text><text x="1080.1" y="478.0" font-size="11.11" textLength="36.1" lengthAdjust="spacingAndGlyphs" font-weight="normal" font-style="normal" fill="#6c6c6c" stroke="#6c6c6c" stroke-width="0.3">Serbie</text><text x="1250.9" y="487.9" font-size="9.74" textLength="50.1" lengthAdjust="spacingAndGlyphs" font-weight="normal" font-style="normal" fill="#7a7a7a">Constanța</text><text x="859.3" y="482.7" font-size="9.74" textLength="44.2" lengthAdjust="spacingAndGlyphs" font-weight="normal" font-style="normal" fill="#7a7a7a">Florence</text><text x="723.5" y="497.5" font-size="10.29" textLength="47.7" lengthAdjust="spacingAndGlyphs" font-weight="normal" font-style="normal" fill="#7a7a7a">Marseille</text><text x="542.3" y="498.8" font-size="11.52" textLength="31.9" lengthAdjust="spacingAndGlyphs" font-weight="normal" font-style="normal" fill="#7a7a7a">Bilbao</text><text x="892.9" y="534.6" font-size="16.87" textLength="39.9" lengthAdjust="spacingAndGlyphs" font-weight="normal" font-style="normal" fill="#6a6a6a" stroke="#6a6a6a" stroke-width="0.45">Italie</text><text x="415.4" y="530.8" font-size="11.66" textLength="22.3" lengthAdjust="spacingAndGlyphs" font-weight="normal" font-style="normal" fill="#7a7a7a">Vigo</text><text x="1080.0" y="526.8" font-size="11.11" textLength="43.6" lengthAdjust="spacingAndGlyphs" font-weight="normal" font-style="normal" fill="#6c6c6c" stroke="#6c6c6c" stroke-width="0.3">Kosovo</text><text x="1175.6" y="523.2" font-size="11.25" textLength="47.0" lengthAdjust="spacingAndGlyphs" font-weight="normal" font-style="normal" fill="#6c6c6c" stroke="#6c6c6c" stroke-width="0.3">Bulgarie</text><text x="1087.0" y="550.0" font-size="10.97" textLength="64.0" lengthAdjust="spacingAndGlyphs" font-weight="normal" font-style="normal" fill="#6c6c6c" stroke="#6c6c6c" stroke-width="0.3">Macédoine</text><text x="0" y="0" font-size="12.5" textLength="99" lengthAdjust="spacing" fill="#8a9a9b" font-style="italic" transform="translate(943,490) rotate(36.5)">Mer Adriatique</text></g><g fill="#585858" stroke="#f5f5f5" stroke-width="1"><circle cx="573.5" cy="152.9" r="2.3"/><circle cx="621.9" cy="228.5" r="2.3"/><circle cx="852.3" cy="149.9" r="2.3"/><circle cx="929.3" cy="189.3" r="2.3"/><circle cx="936.7" cy="243.3" r="2.3"/><circle cx="1048.8" cy="119.7" r="2.3"/><circle cx="1200" cy="106" r="2.3"/><circle cx="1163.7" cy="204.5" r="2.3"/><circle cx="1171.8" cy="286.4" r="2.3"/><circle cx="626.7" cy="299" r="2.3"/><circle cx="888.3" cy="345.1" r="2.3"/><circle cx="996.5" cy="343" r="2.3"/><circle cx="819.3" cy="371.3" r="2.3"/><circle cx="734.8" cy="424.7" r="2.3"/><circle cx="833.5" cy="434.2" r="2.3"/><circle cx="904.9" cy="436" r="2.3"/><circle cx="880.8" cy="489" r="2.3"/><circle cx="747.2" cy="503.9" r="2.3"/><circle cx="611.5" cy="455" r="2.3"/><circle cx="557.7" cy="505" r="2.3"/><circle cx="425.4" cy="536.5" r="2.3"/><circle cx="1090" cy="455.4" r="2.3"/><circle cx="1218.4" cy="467" r="2.3"/><circle cx="1275.6" cy="475.5" r="2.3"/></g>
<g fill="#fff" stroke="#8a8df2" stroke-width="1.3">
 <circle cx="622" cy="199.5" r="3.7"/><circle cx="590.7" cy="231.5" r="3.7"/><circle cx="653.2" cy="231.5" r="3.7"/><circle cx="622" cy="262.3" r="3.7"/><circle cx="622" cy="231.5" r="3.7"/>
 <circle cx="687" cy="294" r="3.7"/><circle cx="654.2" cy="327.2" r="3.7"/><circle cx="719.7" cy="327.2" r="3.7"/><circle cx="687" cy="359.8" r="3.7"/><circle cx="687" cy="327.2" r="3.7"/>
</g>
</svg>
<!-- info box -->
<div class="a" style="left:6px;top:6px;width:317px;height:156px;background:#fff;border:1px solid #8f8f8f;border-radius:5px;box-shadow:0 1px 2px rgba(0,0,0,.25)"></div>
<svg class="a" style="left:12px;top:11px" width="20" height="20" viewBox="0 0 20 20"><circle cx="10" cy="10" r="8.2" fill="none" stroke="#4a4a4a" stroke-width="1.5"/><circle cx="10" cy="6" r="1.2" fill="#4a4a4a"/><rect x="9.05" y="8.6" width="1.9" height="6" fill="#4a4a4a"/></svg>
<div class="a" style="left:37px;top:11px;font-size:15px;color:#444;line-height:20.7px;width:270px">Fonctionnement des zones de</div>
<div class="a" style="left:13px;top:31.7px;font-size:15px;color:#444;line-height:20.7px">recherche</div>
<svg class="a" style="left:304px;top:14px" width="14" height="14" viewBox="0 0 14 14"><path d="M1.5,1.5 L12.5,12.5 M12.5,1.5 L1.5,12.5" stroke="#444" stroke-width="2"/></svg>
<div class="a" style="left:23.6px;top:58px;font-size:11.9px;color:#444;line-height:14px;width:300px"><i class="dd"></i>Faire un clic droit pour ajouter une zone de<br>recherche, il est possible de cumuler plusieurs zones.<br><i class="dd"></i>Un simple clic sur une zone de recherche permet<br>de la supprimer. <i class="dd"></i>Utiliser les poignées sur le<br>périmètre de la zone pour agrandir ou réduire la zone<br>de recherche. <i class="dd"></i>Utiliser la poignée centrale pour<br>déplacer la zone de recherche sur la carte.</div>
<!-- zoom ctrl -->
<div class="a" style="left:1205px;top:10px;width:32px;height:61px;background:#fff;border-radius:4px;box-shadow:0 0 0 2px rgba(0,0,0,.1)"></div>
<div class="a" style="left:1205px;top:40px;width:32px;height:1px;background:#ddd"></div>
<svg class="a" style="left:1205px;top:9px" width="32" height="62" viewBox="0 0 32 62"><path d="M10,16 H22 M16,10 V22 M10,46 H22" stroke="#333" stroke-width="3"/></svg>
<div class="a" style="left:1207px;top:130px;width:29px;height:29px;background:#fff;border-radius:4px;box-shadow:0 0 0 2px rgba(0,0,0,.1)"></div>
<svg class="a" style="left:1213px;top:137px" width="17" height="16" viewBox="0 0 17 16"><path d="M1,3 L5.5,1 L5.5,13 L1,15Z M6.5,1 L10.5,3 L10.5,15 L6.5,13Z M11.5,3 L16,1 L16,13 L11.5,15Z" fill="#111"/></svg>
<!-- logo -->
<svg class="a" style="left:6px;top:428px" width="90" height="22" viewBox="0 0 90 22">
 <circle cx="11.2" cy="9.4" r="9" fill="#fff" stroke="#7a7a7a" stroke-width="1.4"/>
 <path d="M6.2,14.6 L6.2,9.6 A5,5 0 1 1 11.2,14.6 Z" fill="#7a7a7a"/>
 <path d="M11.2,6.8 L11.9,8.9 L14,9.6 L11.9,10.3 L11.2,12.4 L10.5,10.3 L8.4,9.6 L10.5,8.9Z" fill="#fff"/>
 <text x="24" y="14" font-family="Liberation Sans" font-weight="bold" font-size="16.5" textLength="60.5" lengthAdjust="spacingAndGlyphs" fill="#fff" stroke="#808080" stroke-width="2" paint-order="stroke" stroke-linejoin="round">mapbox</text>
</svg>
<!-- attribution -->
<div class="a" style="left:976px;top:435px;width:270px;height:20px;background:rgba(255,255,255,.5)"></div>
<div class="a" style="left:981px;top:438px;font-size:12px;color:rgba(0,0,0,.75);line-height:14px;white-space:nowrap">© Mapbox © OpenStreetMap <b style="margin-left:2px">Improve this map</b></div>
</div>
</body></html>
